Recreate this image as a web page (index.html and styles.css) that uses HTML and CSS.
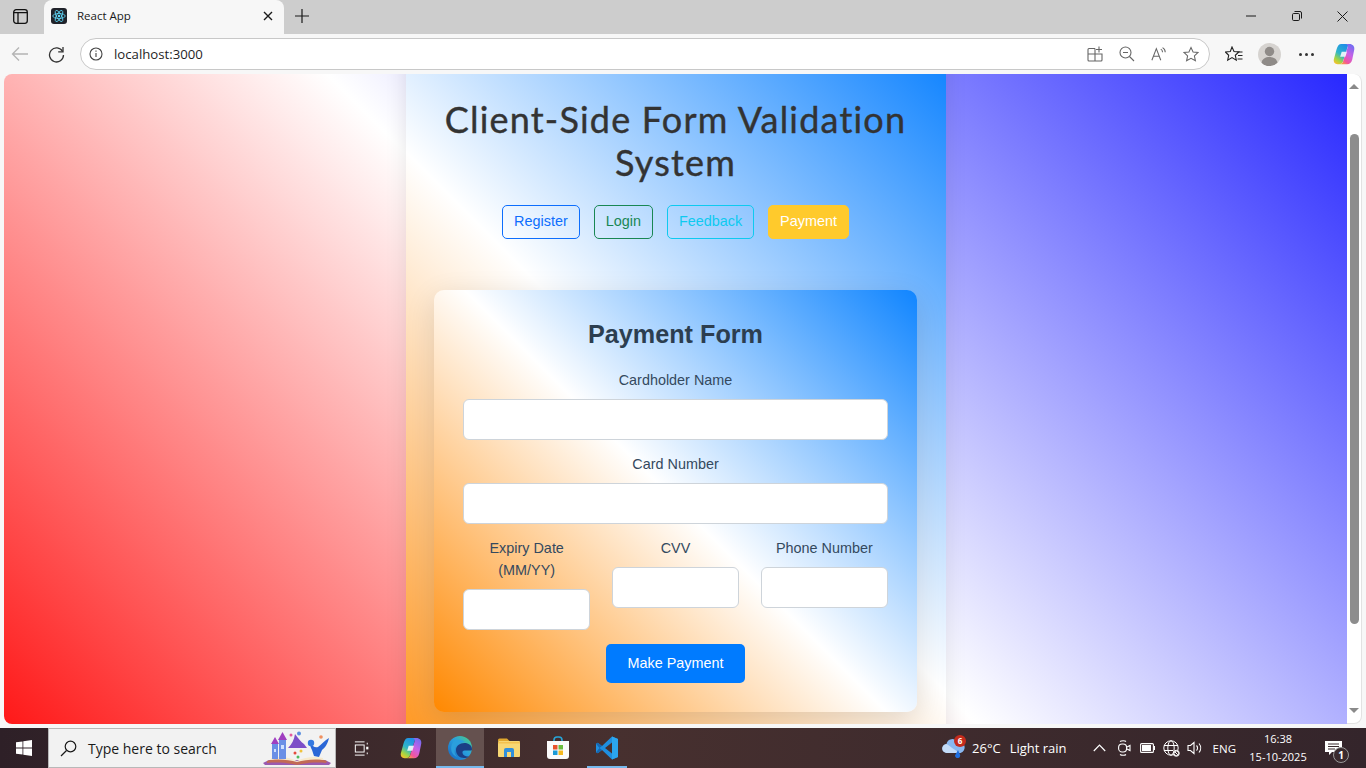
FILE: index.html
```html
<!DOCTYPE html>
<html lang="en">
<head>
<meta charset="utf-8">
<title>React App</title>
<link rel="stylesheet" href="styles.css">
</head>
<body>
<svg class="defs" width="0" height="0" aria-hidden="true">
  <defs>
    <linearGradient id="cpA" x1="0.7" y1="0" x2="0.2" y2="1"><stop offset="0" stop-color="#1f8fe8"/><stop offset=".5" stop-color="#2fb6c8"/><stop offset=".8" stop-color="#a6d540"/><stop offset="1" stop-color="#f8c02c"/></linearGradient>
    <linearGradient id="cpB" x1="0.8" y1="0" x2="0.2" y2="1"><stop offset="0" stop-color="#6f6cf2"/><stop offset=".45" stop-color="#c861e6"/><stop offset=".8" stop-color="#f2559c"/><stop offset="1" stop-color="#f9a13a"/></linearGradient>
    <symbol id="copilot" viewBox="0 0 24 24">
      <path d="M9 1h6c1.200 0 1.800 1 1.400 2.100L11 20c-.7 2.200-2.400 3.200-4.200 3.200H5C2 23.200 .2 20.600 1 17.500L4 6.500C5 3 6.600 1 9 1z" fill="url(#cpA)"/>
      <path d="M13.500 1H18c3.400 0 5.800 2.700 5.200 6L21 18c-.7 3.200-2.800 5.200-5.700 5.200H7c2 0 3.300-1 4-3l5-15.500C16.700 2.700 15.500 1 13.500 1z" fill="url(#cpB)"/>
      <path d="M9.500 9.500h5.700l-1.700 5.500H7.800z" fill="#fff" opacity=".85"/>
    </symbol>
  </defs>
</svg>

<div class="tabstrip">
  <div class="sidebtn">
    <svg width="15" height="15" viewBox="0 0 15 15" fill="none" stroke="#111" stroke-width="1.300"><rect x=".7" y=".7" width="13.600" height="13.600" rx="2.500"/><path d="M.7 3.600h13.600M5 3.600v10.700"/></svg>
  </div>
  <div class="tab">
    <span class="favicon">
      <svg width="16" height="16" viewBox="0 0 18 18" fill="none" stroke="#61dafb" stroke-width=".9"><ellipse cx="9" cy="9" rx="7" ry="2.800"/><ellipse cx="9" cy="9" rx="7" ry="2.800" transform="rotate(60 9 9)"/><ellipse cx="9" cy="9" rx="7" ry="2.800" transform="rotate(120 9 9)"/><circle cx="9" cy="9" r="1.400" fill="#61dafb" stroke="none"/></svg>
    </span>
    <span class="tabtitle">React App</span>
    <svg class="tabclose" width="10" height="10" viewBox="0 0 10 10" stroke="#1a1a1a" stroke-width="1.400"><path d="M1 1l8 8M9 1l-8 8"/></svg>
  </div>
  <svg class="newtab" width="14" height="14" viewBox="0 0 14 14" stroke="#1a1a1a" stroke-width="1.200"><path d="M7 0v14M0 7h14"/></svg>
  <div class="winctrls">
    <svg width="10" height="10" viewBox="0 0 10 10" stroke="#1a1a1a" stroke-width="1"><path d="M0 5h10"/></svg>
    <svg width="10" height="10" viewBox="0 0 10 10" fill="none" stroke="#1a1a1a" stroke-width="1"><rect x=".5" y="2.500" width="7" height="7" rx="1.200"/><path d="M2.500 .5h5.500a1.500 1.500 0 0 1 1.500 1.500v5.500"/></svg>
    <svg width="11" height="11" viewBox="0 0 11 11" stroke="#1a1a1a" stroke-width="1"><path d="M.5 .5l10 10M10.500 .5l-10 10"/></svg>
  </div>
</div>

<div class="toolbar">
  <svg class="back" width="18" height="16" viewBox="0 0 18 16" fill="none" stroke="#b4b4b4" stroke-width="1.300"><path d="M17 8H1.500M8 1.500L1.500 8 8 14.500"/></svg>
  <svg class="reload" width="17" height="17" viewBox="0 0 17 17" fill="none" stroke="#333" stroke-width="1.300"><path d="M14.600 5.500A7 7 0 1 0 15.500 9"/><path d="M15 1v4.800h-4.800"/></svg>
  <div class="omnibox">
    <svg width="14" height="14" viewBox="0 0 14 14" fill="none" stroke="#444" stroke-width="1.100"><circle cx="7" cy="7" r="6"/><path d="M7 6v4M7 3.600v1.200"/></svg>
    <span class="url">localhost:3000</span>
    <div class="omni-icons">
      <svg width="16" height="16" viewBox="0 0 16 16" fill="none" stroke="#666" stroke-width="1.100"><path d="M8 2.500H2a1 1 0 0 0-1 1V14a1 1 0 0 0 1 1h12a1 1 0 0 0 1-1V8H1M8 2.500V15"/><path d="M12 .5v6M9 3.500h6"/></svg>
      <svg width="16" height="16" viewBox="0 0 16 16" fill="none" stroke="#666" stroke-width="1.100"><circle cx="6.500" cy="6.500" r="5.500"/><path d="M10.500 10.500L15 15M4 6.500h5"/></svg>
      <svg width="16" height="16" viewBox="0 0 18 16" fill="none" stroke="#666" stroke-width="1.200"><path d="M1 15L6 2l5 13M2.800 10.500h6.400"/><path d="M11 2.500a4 4 0 0 1 2 3.500M13 .8a6 6 0 0 1 3 5.200"/></svg>
      <svg width="16" height="16" viewBox="0 0 17 16" fill="none" stroke="#666" stroke-width="1.100"><path d="M8.500 1l2.200 4.800 5.300.6-3.900 3.600 1.100 5.200-4.700-2.700-4.700 2.700 1.100-5.200L1 6.400l5.300-.6z"/></svg>
    </div>
  </div>
  <svg class="favs" width="18" height="16" viewBox="0 0 18 16" fill="none" stroke="#222" stroke-width="1.100"><path d="M7 1l2 4.500 4.900.5-3.600 3.300 1 4.900L7 11.600 2.700 14.200l1-4.900L.4 6l4.900-.5z"/><path d="M12.500 6h5M13 9.500h4.500M12.500 13h5"/></svg>
  <span class="avatar"><svg width="23" height="23" viewBox="0 0 23 23"><circle cx="11.500" cy="8.500" r="4.700" fill="#8f8b88"/><path d="M3.500 20c.6-4.200 4-6 8-6s7.400 1.800 8 6a11 11 0 0 1-16 0z" fill="#8f8b88"/></svg></span>
  <span class="more"><i></i><i></i><i></i></span>
  <svg class="copilot" width="22" height="22"><use href="#copilot"/></svg>
</div>

<div class="viewport-row">
  <main class="viewport">
    <div class="canvas">
      <div class="page">
        <h1 class="title">Client-Side Form Validation System</h1>
        <nav class="tabs">
          <button class="pill pill-blue">Register</button>
          <button class="pill pill-green">Login</button>
          <button class="pill pill-cyan">Feedback</button>
          <button class="pill pill-yellow">Payment</button>
        </nav>
        <form class="card">
          <h2 class="card-title">Payment Form</h2>
          <div class="field">
            <label class="label">Cardholder Name</label>
            <input class="input" type="text">
          </div>
          <div class="field">
            <label class="label">Card Number</label>
            <input class="input" type="text">
          </div>
          <div class="row">
            <div class="field">
              <label class="label">Expiry Date (MM/YY)</label>
              <input class="input" type="text">
            </div>
            <div class="field">
              <label class="label">CVV</label>
              <input class="input" type="text">
            </div>
            <div class="field">
              <label class="label">Phone Number</label>
              <input class="input" type="text">
            </div>
          </div>
          <button class="submit" type="button">Make Payment</button>
        </form>
      </div>
    </div>
  </main>
  <div class="scrollbar">
    <span class="arrow-up"></span>
    <div class="track"><div class="thumb"></div></div>
    <span class="arrow-down"></span>
  </div>
</div>

<footer class="taskbar">
  <div class="startbtn">
    <svg width="16" height="16" viewBox="0 0 16 16" fill="#fff"><path d="M0 2.300l6.500-.9v6.200H0zM7.300 1.300L16 0v7.600H7.300zM0 8.400h6.500v6.200L0 13.700zM7.300 8.400H16V16l-8.700-1.200z"/></svg>
  </div>
  <div class="searchbox">
    <svg width="17" height="17" viewBox="0 0 17 17" fill="none" stroke="#1a1a1a" stroke-width="1.200"><circle cx="10.500" cy="6.500" r="5.300"/><path d="M6.500 10.500L1 16"/></svg>
    <span class="searchtext">Type here to search</span>
    <svg class="bookart" width="68" height="34" viewBox="0 0 68 34">
      <path d="M0 32l6-3h56l6 3-2 2H2z" fill="#9a5ab0"/>
      <path d="M4 30c9-3 20-3 30 1 10-4 21-4 30-1l-1 2c-10-1-21 0-29 2-8-2-19-3-30-2z" fill="#c26a55"/>
      <path d="M8 27c8-2 18-1 26 3 8-4 18-5 26-3v2c-9-1-19 0-26 2-7-2-17-3-26-2z" fill="#f6e9cc"/>
      <path d="M9 13h6v15H9zM16 9h7v19h-7z" fill="#6a8fe6"/>
      <path d="M8 13l4-7 4 7zM15 9l4.500-8L24 9z" fill="#a03fc0"/>
      <path d="M11 18h2v3h-2zM18 14h3v4h-3z" fill="#cfe0ff"/>
      <path d="M25 17c4-4 6-8 7-14 3 4 6 8 9 10l3 4z" fill="#7c4fc8"/>
      <path d="M47 12c2 3 5 5 8 4 3-2 7-7 11-9-1 5-4 10-7 12l-3 7-5-1-2-6c-1-2-2-4-2-7z" fill="#2a66d6"/>
      <circle cx="48" cy="12" r="3.200" fill="#3478e0"/>
      <circle cx="32" cy="22" r="1.500" fill="#e64b3c"/><circle cx="38" cy="20" r="1.500" fill="#f0c23c"/><circle cx="35" cy="26" r="1.500" fill="#4dbb5a"/><circle cx="28" cy="4" r="1.500" fill="#e65a9c"/><circle cx="36" cy="2.500" r="2" fill="#5b8fe0"/><circle cx="58" cy="6" r="1.800" fill="#f09060"/>
    </svg>
  </div>
  <div class="taskitem taskitem-wide">
    <svg width="15" height="15" viewBox="0 0 17 16" fill="none" stroke="#fff" stroke-width="1.100"><path d="M1 .5h11M1 15.500h11"/><rect x="1.500" y="4" width="10" height="8"/><path d="M15 1.500v2M15 12.500v2"/><rect x="13.800" y="6" width="2.500" height="3" fill="#fff" stroke="none"/></svg>
  </div>
  <div class="taskitem taskitem-wide">
    <svg width="22" height="22"><use href="#copilot"/></svg>
  </div>
  <div class="taskitem taskitem-active">
    <svg width="24" height="24" viewBox="0 0 24 24"><defs><linearGradient id="eg" x1="0" y1="1" x2="1" y2="0"><stop offset="0" stop-color="#1565c0"/><stop offset=".55" stop-color="#2aa0de"/><stop offset="1" stop-color="#4fd27a"/></linearGradient></defs><circle cx="12" cy="12" r="12" fill="url(#eg)"/><path d="M24 13c0-3.500-3.500-6-7.500-6-5 0-8.500 3-8.500 7 0 4.500 3.500 8 8 8 2 0 3.500-.5 5-1.500-3 .5-6-1-6.500-3.500-.3-1.500.5-2.500 2-2.500h6.300c.7 0 1.200-.5 1.200-1.500z" fill="#1b3f86"/><path d="M5 6C8 3 13 3 17 6c-4 0-9 2-10 7-1 3 0 6 2 8C4 19 1 13 5 6z" fill="#2b9fdd"/></svg>
  </div>
  <div class="taskitem taskitem-near">
    <svg width="22" height="20" viewBox="0 1 22 20"><path d="M0 3a1.500 1.500 0 0 1 1.500-1.500H9l2.500 2.500H0z" fill="#e0a82e"/><rect y="4" width="22" height="16" rx="1" fill="#f7d774"/><path d="M0 6.500h22V5H0z" fill="#f2c14e"/><path d="M6 20v-7a2 2 0 0 1 2-2h6a2 2 0 0 1 2 2v7h-3v-5H9v5z" fill="#2f8fdc"/></svg>
  </div>
  <div class="taskitem taskitem-near">
    <svg width="24" height="24" viewBox="0 0 24 24"><path d="M8 6V4a3 3 0 0 1 3-3h2a3 3 0 0 1 3 3v2" fill="none" stroke="#27a5d8" stroke-width="1.600"/><path d="M1 5h22v15a3 3 0 0 1-3 3H4a3 3 0 0 1-3-3z" fill="#fafafa"/><rect x="7" y="9" width="4.500" height="4.500" fill="#e8532c"/><rect x="12.500" y="9" width="4.500" height="4.500" fill="#6bbd3f"/><rect x="7" y="14.500" width="4.500" height="4.500" fill="#1b9ad6"/><rect x="12.500" y="14.500" width="4.500" height="4.500" fill="#f5b81e"/></svg>
  </div>
  <div class="taskitem taskitem-open">
    <svg width="24" height="24" viewBox="0 0 24 24"><path fill-rule="evenodd" d="M17 .5L7 10 2.800 6.800 1 7.800v8.400l1.800 1L7 14l10 9.500 6-2.500V3zM17 6.500L10 12l7 5.500z" fill="#1f8fe0"/><path fill-rule="evenodd" d="M17 .5L23 3v18l-6 2.500V17.500 6.500z" fill="#2ba6ef"/><path d="M1 7.800L2.800 6.800 7 10l-2.500 2zM1 16.200l1.800 1L7 14l-2.500-2z" fill="#1567b0"/></svg>
  </div>
  <div class="tray">
    <div class="weather">
      <svg width="26" height="24" viewBox="0 0 26 24"><path d="M6 17a4.500 4.500 0 0 1-.5-9 6 6 0 0 1 11-2 5 5 0 0 1 3 11z" fill="#8ab8f0"/><path d="M6 17a4.500 4.500 0 0 1-.5-9c2 1 7 5 13 9z" fill="#c4dcf8"/><path d="M17 14l2 4.500a2.600 2.600 0 1 1-5 1z" fill="#1f6fe0"/></svg>
      <span class="badge">6</span>
    </div>
    <span class="traytext temp">26°C</span>
    <span class="traytext cond">Light rain</span>
    <svg class="chev" width="13" height="8" viewBox="0 0 13 8" fill="none" stroke="#fff" stroke-width="1.200"><path d="M.8 7L6.500 1.200 12.200 7"/></svg>
    <svg class="ti-cam" width="13" height="16" viewBox="0 0 13 16" fill="none" stroke="#fff" stroke-width="1.100"><path d="M2 1.500c1.500-1 5-1 6 0M2 14.500c1.500 1 5 1 6 0"/><rect x=".6" y="4" width="8" height="8" rx="3.500"/><path d="M9 7l3-1.500v5L9 9"/></svg>
    <svg class="ti-bat" width="15" height="10" viewBox="0 0 15 10"><rect x=".6" y=".6" width="12.800" height="8.800" rx="1" fill="none" stroke="#fff" stroke-width="1.100"/><rect x="2" y="2" width="9" height="6" fill="#fff"/><rect x="14" y="3" width="1" height="4" fill="#fff"/></svg>
    <svg class="ti-net" width="17" height="17" viewBox="0 0 17 17" fill="none" stroke="#fff" stroke-width="1"><circle cx="8" cy="8" r="7.200"/><ellipse cx="8" cy="8" rx="3.200" ry="7.200"/><path d="M1 5.500h14M1 10.500h9"/><circle cx="13.300" cy="13.300" r="3" fill="#3a2a2e"/><circle cx="13.300" cy="13.300" r="2.300"/><path d="M11.800 11.800l3 3"/></svg>
    <svg class="ti-vol" width="16" height="14" viewBox="0 0 16 14" fill="none" stroke="#fff" stroke-width="1.100"><path d="M1 4.500h2.500L7 1.500v11L3.500 9.500H1z"/><path d="M9.500 4.500a3.500 3.500 0 0 1 0 5M12 2.500a7 7 0 0 1 0 9"/></svg>
    <span class="traytext lang">ENG</span>
    <div class="clock"><span>16:38</span><span>15-10-2025</span></div>
    <div class="notif">
      <svg width="17" height="15" viewBox="0 0 17 15"><path d="M0 0h17v11H7l-3 3v-3H0z" fill="#fff"/><path d="M3 3h11M3 5.500h11M3 8h7" stroke="#3a2a2e" stroke-width="1"/></svg>
      <span class="notifcount">1</span>
    </div>
  </div>
</footer>
</body>
</html>
```
FILE: styles.css
```css
* { box-sizing: border-box; }
html, body { margin: 0; height: 100%; }
body {
  width: 1366px;
  height: 768px;
  overflow: hidden;
  display: flex;
  flex-direction: column;
  background: #f7f7f7;
  font-family: "Liberation Sans", Arial, sans-serif;
}
.defs { position: absolute; }

/* browser chrome */
.tabstrip {
  height: 34px;
  flex: none;
  display: flex;
  align-items: center;
  background: #cdcdcd;
}
.sidebtn { width: 44px; display: flex; justify-content: center; padding-right: 4px; margin-bottom: 2px; }
.tab {
  width: 240px;
  height: 34px;
  display: flex;
  align-items: center;
  padding: 0 11px 2px 7px;
  background: #f7f7f7;
  border-radius: 8px 8px 0 0;
}
.favicon {
  width: 16px;
  height: 16px;
  border-radius: 3px;
  background: #20232a;
  display: flex;
  align-items: center;
  justify-content: center;
  overflow: hidden;
}
.favicon svg { flex: none; }
.tabtitle {
  margin: 0 0 1px 10px;
  flex: 1;
  font: 11.5px "Open Sans", sans-serif;
  color: #1a1a1a;
}
.newtab { margin-left: 11px; margin-bottom: 2px; }
.winctrls {
  margin-left: auto;
  margin-bottom: 2px;
  width: 120px;
  display: flex;
  align-items: center;
  justify-content: space-between;
  padding-right: 18px;
}

.toolbar {
  height: 40px;
  flex: none;
  display: flex;
  align-items: center;
  background: #f7f7f7;
  padding-left: 11px;
}
.reload { margin-left: 19px; }
.omnibox {
  margin-left: 15px;
  width: 1130px;
  height: 32px;
  display: flex;
  align-items: center;
  padding: 0 10px 0 8px;
  background: #fff;
  border: 1px solid #c8c8c8;
  border-radius: 16px;
}
.url {
  margin-left: 11px;
  font: 13.2px "Open Sans", sans-serif;
  color: #1f1f1f;
}
.omni-icons {
  margin-left: auto;
  display: flex;
  align-items: center;
  gap: 16px;
}
.favs { margin-left: 15px; }
.avatar {
  margin-left: 15px;
  width: 23px;
  height: 23px;
  border-radius: 50%;
  background: #d6d3d0;
  overflow: hidden;
  display: flex;
}
.more { margin-left: 18px; display: flex; gap: 3px; }
.more i { width: 3px; height: 3px; border-radius: 50%; background: #333; }
.copilot { margin-left: 19px; }

/* viewport */
.viewport-row {
  height: 650px;
  flex: none;
  display: flex;
  margin-left: 4px;
}
.viewport {
  width: 1343px;
  height: 650px;
  overflow: hidden;
  border-radius: 8px 0 0 8px;
}
.canvas {
  margin-top: -58px;
  height: 812px;
  display: flex;
  justify-content: center;
  background: linear-gradient(45deg, #ff0000, #fff 50%, #1c1cff);
}
.page {
  width: 540px;
  height: 812px;
  flex: none;
  padding: 82px 28.8px 0;
  background: linear-gradient(45deg, #ff8800, #fff 50%, #007bff);
  box-shadow: 0 0 20px rgba(0, 0, 0, .1);
}
.title {
  margin: 0;
  padding: 0 10px;
  text-align: center;
  font: 400 36px/43px "Comic Sans MS", "Lato", sans-serif;
  letter-spacing: 1.2px;
  color: #333;
  -webkit-text-stroke: .4px #333;
}
.tabs {
  margin-top: 21px;
  display: flex;
  justify-content: center;
  gap: 14px;
}
.pill {
  height: 34px;
  padding: 0 11px 2px;
  border: 1px solid;
  border-radius: 5px;
  background: transparent;
  font: 14.4px "Liberation Sans", sans-serif;
}
.pill-blue { color: #0d6efd; border-color: #0d6efd; }
.pill-green { color: #198754; border-color: #198754; }
.pill-cyan { color: #0dcaf0; border-color: #0dcaf0; }
.pill-yellow { color: #fff; border-color: #ffca2c; background: #ffca2c; }

.card {
  margin-top: 51px;
  height: 422px;
  padding: 28px 29px 0;
  border-radius: 10px;
  background: linear-gradient(45deg, #ff8800, #fff 50%, #1085ff);
  box-shadow: 0 8px 30px rgba(0, 0, 0, .12);
  display: flex;
  flex-direction: column;
}
.card-title {
  margin: 0 0 19px;
  text-align: center;
  font: 700 25.200px/32px "Liberation Sans", sans-serif;
  color: #2c3e50;
}
.field {
  margin-bottom: 13px;
  display: flex;
  flex-direction: column;
  flex: 1 1 0;
}
.card > .field { flex: none; }
.label {
  margin-bottom: 8px;
  text-align: center;
  font: 14.4px/22px "Liberation Sans", sans-serif;
  color: #34495e;
}
.input {
  height: 41px;
  width: 100%;
  padding: 0 10px;
  background: #fff;
  border: 1px solid #ced4da;
  border-radius: 6px;
}
.row { display: flex; gap: 22px; align-items: flex-start; }
.submit {
  align-self: center;
  margin-top: 1px;
  width: 139px;
  height: 39px;
  padding: 0 0 2px;
  border: 0;
  border-radius: 5px;
  background: #007bff;
  color: #fff;
  font: 14.4px "Liberation Sans", sans-serif;
}

/* scrollbar */
.scrollbar {
  width: 15px;
  height: 650px;
  background: #fff;
  border-right: 1px solid #e2e2e2;
  border-bottom: 1px solid #e2e2e2;
  border-radius: 0 8px 8px 0;
  display: flex;
  flex-direction: column;
  align-items: center;
  padding: 10px 0;
}
.arrow-up { flex: none; width: 0; height: 0; border: 5px solid transparent; border-top: 0; border-bottom: 5px solid #8a8a8a; }
.arrow-down { flex: none; width: 0; height: 0; border: 5px solid transparent; border-bottom: 0; border-top: 5px solid #8a8a8a; }
.track { flex: 1; width: 100%; padding: 45px 2px 0 3px; }
.thumb { height: 490px; background: #8d8d8d; border-radius: 5px; }

/* taskbar */
.taskbar {
  margin-top: 4px;
  height: 40px;
  flex: none;
  display: flex;
  align-items: stretch;
  background: linear-gradient(90deg, #2e2027, #47302f 45%, #34252b);
  color: #fff;
}
.startbtn { width: 48px; display: flex; align-items: center; justify-content: center; }
.searchbox {
  width: 288px;
  display: flex;
  align-items: center;
  padding-left: 11px;
  background: #f2f2f2;
  border: 1px solid #b8b8b8;
}
.searchtext {
  margin-left: 11px;
  font: 14px "Open Sans", sans-serif;
  color: #1a1a1a;
}
.bookart { margin-left: auto; margin-right: 4px; }
.taskitem {
  width: 48px;
  display: flex;
  align-items: center;
  justify-content: center;
}
.taskitem-wide { width: 50px; }
.taskitem-near { margin-left: 1px; }
.taskitem-active { background: #65514f; box-shadow: inset 0 -2px #76b9ed; }
.taskitem-open { width: 40px; margin-left: 5px; box-shadow: inset 0 -2px #76b9ed; }
.tray {
  margin-left: auto;
  display: flex;
  align-items: center;
}
.weather { position: relative; width: 26px; height: 24px; }
.badge {
  position: absolute;
  top: -1px;
  right: 1px;
  width: 12px;
  height: 12px;
  border-radius: 50%;
  background: #c42b1c;
  color: #fff;
  font: 700 8px/12px "Open Sans", sans-serif;
  text-align: center;
}
.traytext { font: 13px "Open Sans", sans-serif; color: #fff; white-space: nowrap; }
.temp { margin-left: 5px; }
.cond { margin-left: 9px; }
.chev { margin-left: 26px; }
.ti-cam { margin-left: 12px; }
.ti-bat { margin-left: 9px; }
.ti-net { margin-left: 8px; }
.ti-vol { margin-left: 7px; }
.lang { margin-left: 10px; font-size: 11.500px; }
.clock {
  margin-left: 12px;
  width: 60px;
  display: flex;
  flex-direction: column;
  align-items: center;
  font: 11px/18px "Open Sans", sans-serif;
  color: #fff;
}
.notif {
  position: relative;
  width: 44px;
  height: 40px;
  margin-left: 14px;
  padding-left: 3px;
  display: flex;
  align-items: center;
}
.notifcount {
  position: absolute;
  left: 11px;
  top: 19px;
  width: 16px;
  height: 16px;
  border-radius: 50%;
  border: 1px solid #999;
  background: #3a2a2e;
  font: 700 10px/14px "Open Sans", sans-serif;
  text-align: center;
}
```
